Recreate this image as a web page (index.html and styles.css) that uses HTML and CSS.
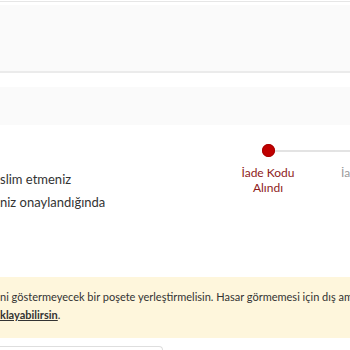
FILE: index.html
```html
<!DOCTYPE html>
<html lang="tr">
<head>
    <meta charset="UTF-8">
    <meta name="viewport" content="width=device-width, initial-scale=1.0">
    <title>İade Talebi</title>
    <link rel="stylesheet" href="styles.css">
</head>
<body>
    <div class="page">
        <div class="top-rule"></div>
        <div class="panel panel-main"></div>
        <div class="panel panel-sub"></div>

        <div class="return-info">
            <div class="info-text">
                <p>slim etmeniz</p>
                <p>niz onaylandığında</p>
            </div>

            <div class="stepper">
                <div class="step active">
                    <div class="track">
                        <span class="line blank"></span>
                        <span class="dot"></span>
                        <span class="line"></span>
                    </div>
                    <div class="label">İade Kodu<br>Alındı</div>
                </div>
                <div class="step">
                    <div class="track">
                        <span class="line"></span>
                        <span class="dot"></span>
                        <span class="line"></span>
                    </div>
                    <div class="label">İade Edildi</div>
                </div>
            </div>
        </div>

        <div class="notice">
            <p class="notice-line">ni göstermeyecek bir poşete yerleştirmelisin. Hasar görmemesi için dış ambalajla birlikte gönder.</p>
            <p class="notice-line"><a href="#">klayabilirsin</a>.</p>
        </div>

        <div class="card-edge"></div>
    </div>
</body>
</html>
```

FILE: styles.css
```css
body {
    font-family: Lato, "Open Sans", Arial, sans-serif;
    background-color: #ffffff;
    color: #333333;
    margin: 0;
    overflow: hidden;
}

.page {
    width: 350px;
    height: 350px;
    overflow: hidden;
}

.top-rule {
    margin-top: 1px;
    border-top: 1px solid #e6e6e6;
}

.panel {
    background-color: #fafafa;
}

.panel-main {
    margin-top: 3px;
    height: 66px;
    border-bottom: 2px solid #ebebeb;
}

.panel-sub {
    margin-top: 14px;
    height: 38px;
}

.return-info {
    display: flex;
    margin-top: 13px;
    height: 139px;
}

.info-text {
    width: 218px;
    flex-shrink: 0;
    padding-top: 30px;
    font-size: 13px;
}

.info-text p {
    margin: 0;
    line-height: 23px;
}

.stepper {
    display: flex;
    flex-shrink: 0;
}

.step {
    width: 100px;
    flex-shrink: 0;
    text-align: center;
}

.track {
    display: flex;
    align-items: center;
    height: 13px;
    margin-top: 6px;
}

.line {
    flex: 1;
    height: 2px;
    background-color: #e3e3e3;
}

.line.blank {
    background-color: transparent;
}

.dot {
    width: 13px;
    height: 13px;
    border-radius: 50%;
    background-color: transparent;
}

.step.active .dot {
    background-color: #c00000;
    box-shadow: 0 0 0 1px #a80000 inset;
}

.label {
    margin-top: 8px;
    font-size: 12px;
    line-height: 15px;
    color: #9a9a9a;
}

.step.active .label {
    color: #8e1b1b;
}

.notice {
    background-color: #fef6dc;
    height: 61px;
    padding-top: 11px;
    box-sizing: border-box;
    font-size: 11px;
}

.notice-line {
    margin: 0;
    line-height: 18px;
    white-space: nowrap;
}

.notice a {
    color: #333333;
    font-weight: 700;
}

.card-edge {
    margin-top: 8px;
    width: 162px;
    height: 10px;
    border-top: 1px solid #dedede;
    border-right: 1px solid #dedede;
    border-top-right-radius: 4px;
}
```
